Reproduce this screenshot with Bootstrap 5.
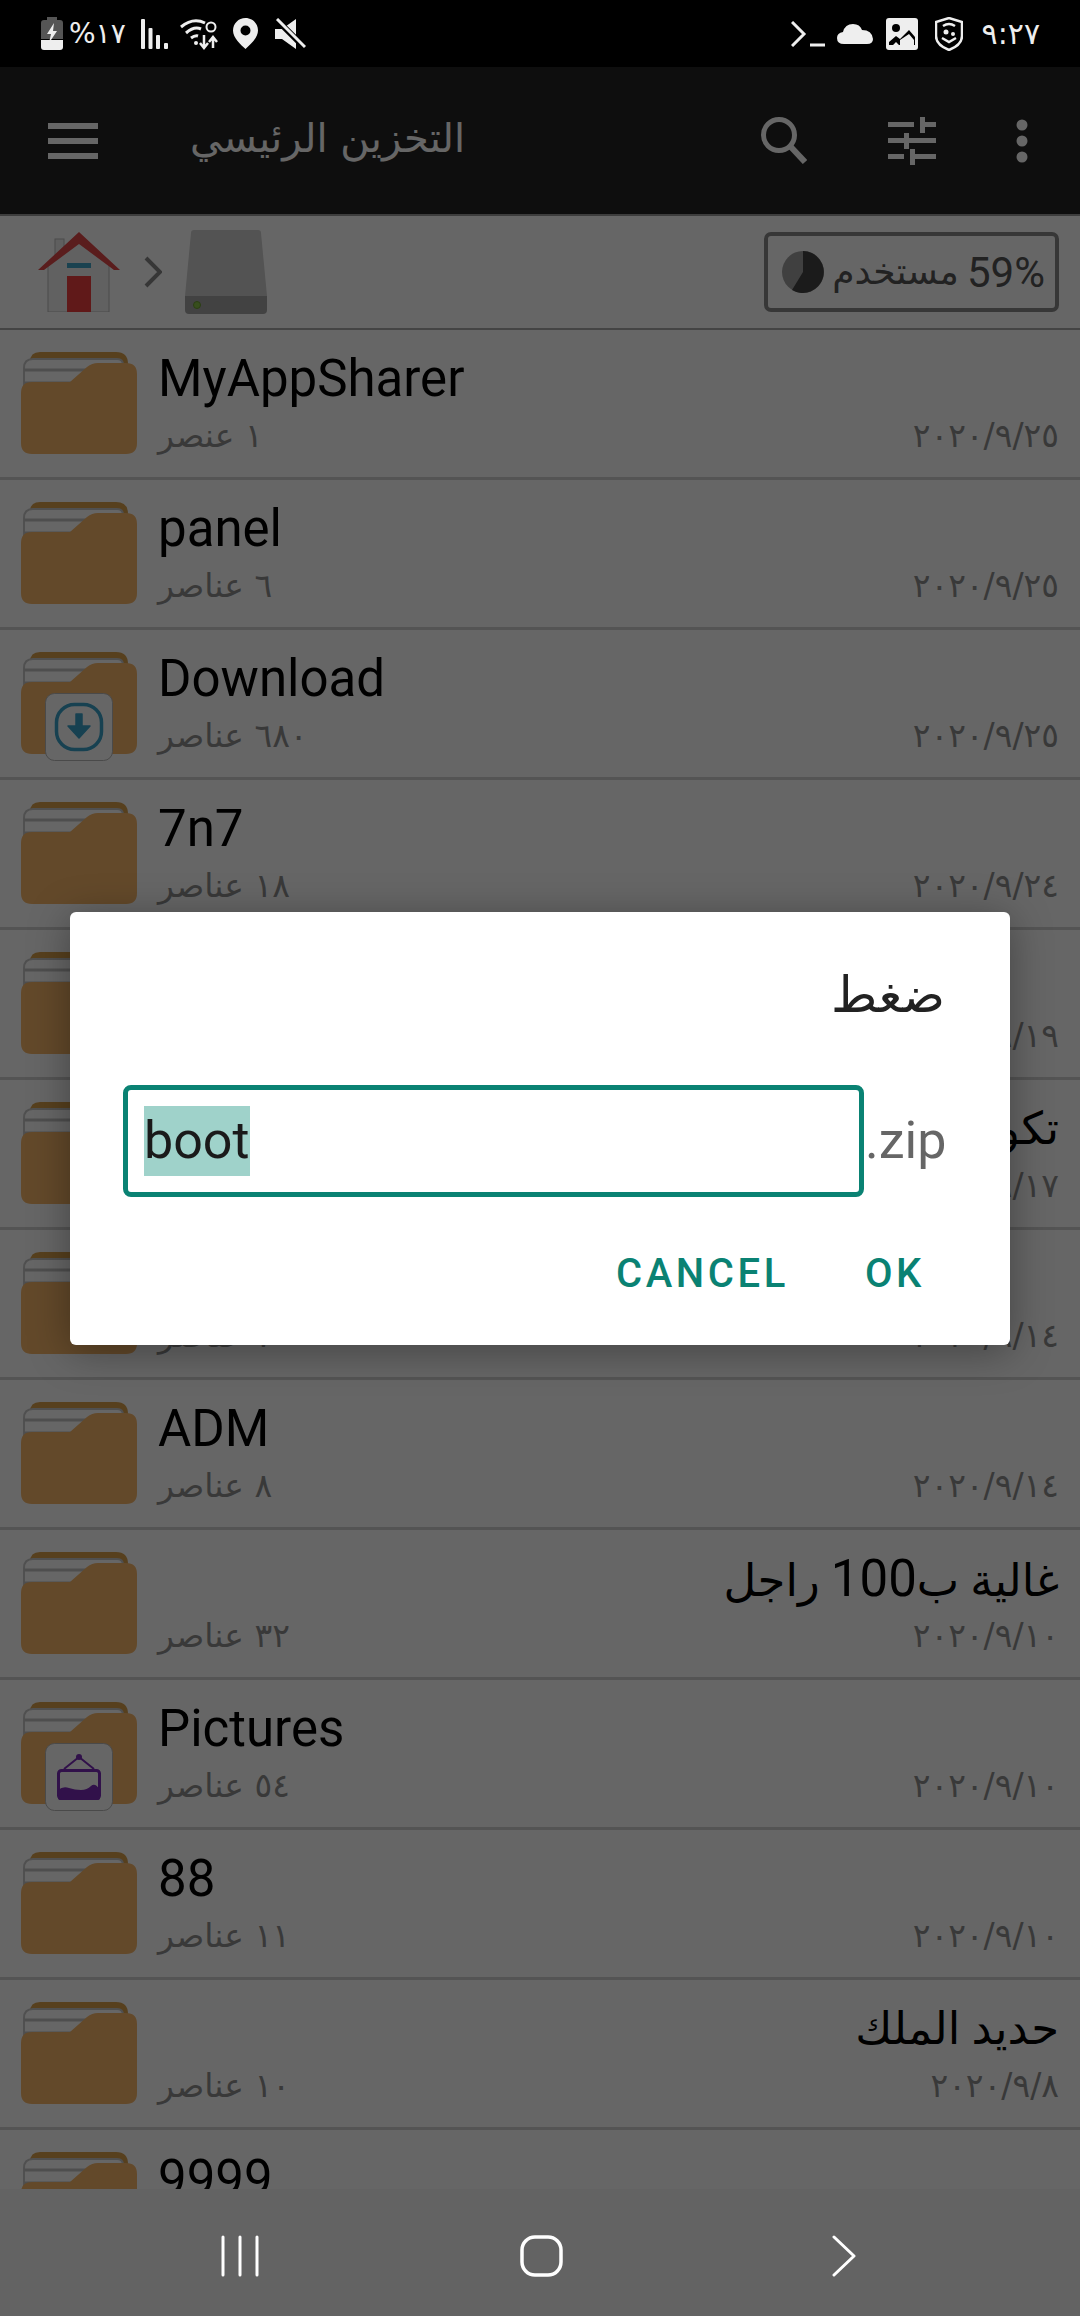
<!DOCTYPE html>
<html lang="ar">
<head>
<meta charset="utf-8">
<title>التخزين الرئيسي</title>
<link rel="stylesheet" href="https://cdn.jsdelivr.net/npm/bootstrap@5.3.0/dist/css/bootstrap.min.css">
<style>
html,body{margin:0;height:100%;background:#000}
body{font-family:Roboto,"DejaVu Sans","Noto Sans",sans-serif;width:1080px;height:2316px;overflow:hidden}
.shell{width:1080px;height:2316px}
.sbar{height:67px;flex:none;background:#000;color:#eee;padding:0 40px 0 41px}
.sgroup{height:67px}
.stxt{font-family:"DejaVu Sans",sans-serif;font-size:28px;line-height:1}
.stime{font-family:"DejaVu Sans",sans-serif;font-size:30px;line-height:1}
.gap-pct{margin-left:6px}
.gap-sig{margin-left:15px}.gap-wifi{margin-left:11px}.gap-loc{margin-left:15px}.gap-mute{margin-left:17px}
.gap-cloud{margin-left:12px}.gap-img{margin-left:13px}.gap-shd{margin-left:17px}.gap-time{margin-left:19px}
.stage{flex:1 1 0;min-height:0;position:relative;background:#fff;overflow:hidden}
.scrim{position:absolute;inset:0;background:rgba(0,0,0,.6)}
.appbar{height:147px;flex:none;background:#232323;color:#fff;padding:0 52px 0 48px}
.apptitle{font-family:"DejaVu Sans",sans-serif;font-size:40px;width:272px;margin-left:92px;margin-top:-6px;white-space:nowrap;text-align:right;color:#fff}
.gap-tune{margin-left:81px}.gap-dots{margin-left:80px}
.crumb{height:116px;flex:none;background:#fff;border-top:2px solid #999;border-bottom:2px solid #aaa;padding:0 21px 0 38px}
.gap-drive{margin-left:23px}
.chip{width:295px;height:80px;border:4px solid #8a8a8a;border-radius:7px;color:#555;font-size:42px;padding:0 10px 0 14px}
.chip-ar{font-family:"DejaVu Sans",sans-serif;font-size:36px}
.frow{height:150px;flex:none;border-bottom:3px solid #d2d2d2;padding:22px 21px 0 21px;gap:21px}
.fico{position:relative;width:116px;height:108px;flex:none}
.fbody{flex:1 1 0;min-width:0;margin-top:-5px}
.fname{font-size:51px;line-height:64px;height:64px;color:#000;white-space:nowrap;font-family:Roboto,"DejaVu Sans",sans-serif}
.fname-ar{font-size:45px}
.fname-lat{font-size:51px}
.fmeta{font-family:"DejaVu Sans",sans-serif;font-size:33px;line-height:44px;color:#8e8e8e;margin-top:3px}
.fbadge{left:24px;top:41px}
.list{flex:1 1 0;min-height:0;overflow:hidden;background:#fff}
.navb{height:127px;flex:none;background:#636363;padding:6px 0 0}
.navin{padding-left:220px}
.gap-home{margin-left:260px}.gap-back{margin-left:269px}
.dlg{position:absolute;left:70px;top:845px;width:940px;height:433px;border:0;border-radius:6px;background:#fff;box-shadow:0 6px 40px rgba(0,0,0,.35);padding:63px 65px 0 53px}
.dtitle{font-family:"DejaVu Sans",sans-serif;font-size:50px;line-height:40px;color:#222;text-align:right}
.drow{margin-top:70px}
.dfield{width:741px;height:112px;border:5px solid #0a8273;border-radius:8px;padding:16px;font-size:52px;line-height:70px;color:#1a1a1a;flex:none;background:#fff}
.dfield:focus{box-shadow:none}
.dsel{background:#9fd2ca;display:inline-block;height:70px}
.dext{font-size:52px;color:#666;line-height:1;margin-left:1px}
.dacts{margin-top:53px;padding-right:20px;gap:76px}
.dbtn{padding:0;border:0;background:none;color:#0a8273;font-size:40px;font-weight:500;letter-spacing:3.6px;line-height:48px;border-radius:0}
.dbtn:hover,.dbtn:active{color:#0a8273;background:none}
</style>
</head>
<body>
<svg width="0" height="0" class="d-block position-absolute" aria-hidden="true">
  <symbol id="fold" viewBox="0 0 116 108">
    <path d="M9 10Q9 0 19 0H95Q107 0 107 12V40H9Z" fill="#d9a04d"/>
    <path d="M3 16Q3 7 12 7H96Q102 7 102 13V50H3Z" fill="#fff" stroke="#c8c8c8" stroke-width="2"/>
    <path d="M3 18H80M3 31H72" stroke="#c4c4c4" stroke-width="3" fill="none"/>
    <path d="M0 41Q0 30 11 30H49L66 15Q71 11 77 11H105Q116 11 116 22V91Q116 102 105 102H11Q0 102 0 91Z" fill="#f7b669"/>
  </symbol>
  <symbol id="bdl" viewBox="0 0 68 68">
    <rect x=".5" y=".5" width="67" height="67" rx="9" fill="#fff" stroke="#b9b9b9"/>
    <rect x="11.5" y="11.5" width="45" height="45" rx="18" fill="none" stroke="#3ba4cb" stroke-width="3.5"/>
    <path d="M31 21H37V33H45L34 45 23 33H31Z" fill="#3ba4cb" stroke="#3ba4cb" stroke-linejoin="round" stroke-width="1.5"/>
  </symbol>
  <symbol id="bpic" viewBox="0 0 68 68">
    <rect x=".5" y=".5" width="67" height="67" rx="9" fill="#fff" stroke="#b9b9b9"/>
    <path d="M19 26L34 14 49 26" fill="none" stroke="#7a2bb8" stroke-width="2"/>
    <circle cx="34" cy="14" r="3" fill="#7a2bb8"/>
    <rect x="13.5" y="27.5" width="41" height="28" rx="3" fill="#fff" stroke="#7a2bb8" stroke-width="3"/>
    <path d="M13 55V47Q18 43 24 45T36 47 46 43 55 47V55Q55 57 53 57H15Q13 57 13 55Z" fill="#7a2bb8"/>
  </symbol>
</svg>
<div class="shell d-flex flex-column">
  <!-- status bar -->
  <div class="sbar d-flex justify-content-between align-items-center">
    <div class="sgroup d-flex align-items-center">
      <svg width="22" height="33" viewBox="0 0 22 33"><path d="M6 0H16V3H19Q22 3 22 6V22H0V6Q0 3 3 3H6Z" fill="#555"/><path d="M0 23H22V30Q22 33 19 33H3Q0 33 0 30Z" fill="#eee"/><path d="M13 6L6 17H10L8 26 16 14H12Z" fill="#eee"/></svg>
      <span class="stxt gap-pct" dir="ltr">%١٧</span>
      <svg width="28" height="30" viewBox="0 0 28 30" class="gap-sig" fill="#eee"><rect width="4" height="30" rx="1"/><rect x="7.500" y="9" width="4" height="21" rx="1"/><rect x="15" y="16" width="4" height="14" rx="1"/><rect x="23" y="24" width="4" height="6" rx="1"/></svg>
      <svg width="38" height="32" viewBox="0 0 38 32" class="gap-wifi" fill="none" stroke="#eee" stroke-width="3"><path d="M1 9Q13 -1 25 5M6 15Q14 8 21 11M11 20Q15 17 18 18"/><circle cx="16" cy="25" r="2" fill="#eee" stroke="none"/><path d="M24 17V29M20 25L24 30 28 25M33 30V20M29 24L33 19 37 24" stroke-width="2.500"/><circle cx="31" cy="9" r="4.500" stroke-width="2"/></svg>
      <svg width="25" height="31" viewBox="0 0 25 31" class="gap-loc"><path fill-rule="evenodd" d="M12.500 0C5.500 0 0 5.500 0 12.500 0 20 8 27 12.500 31 17 27 25 20 25 12.500 25 5.500 19.500 0 12.500 0ZM12.500 7.500A5 5 0 1 1 12.500 17.500 5 5 0 1 1 12.500 7.500Z" fill="#eee"/></svg>
      <svg width="31" height="31" viewBox="0 0 31 31" class="gap-mute"><path d="M0 11H7L21 1V31L7 21H0Z" fill="#eee"/><path d="M1 1L30 30" stroke="#000" stroke-width="6"/><path d="M2 1L30 29" stroke="#eee" stroke-width="3"/></svg>
    </div>
    <div class="sgroup d-flex align-items-center">
      <svg width="34" height="26" viewBox="0 0 34 26" fill="none" stroke="#eee" stroke-width="3"><path d="M1 1L13 13 1 25M19 24H34"/></svg>
      <svg width="36" height="21" viewBox="0 0 36 21" class="gap-cloud"><path d="M7 21Q0 21 0 15 0 10 6 9 8 1 16 1 23 1 25 7 35 7 36 16 36 21 30 21Z" fill="#eee"/></svg>
      <svg width="32" height="32" viewBox="0 0 32 32" class="gap-img"><rect width="32" height="32" rx="3" fill="#eee"/><circle cx="10" cy="10" r="4" fill="#000"/><path d="M3 26V24L10 18 14 21 23 12 29 19V27H3Z" fill="#000"/><path d="M7 27L10 24 13 27M14 22L23 16 28 22V27H14Z" fill="#eee"/></svg>
      <svg width="28" height="34" viewBox="0 0 28 34" class="gap-shd" fill="none" stroke="#eee" stroke-width="2.500"><path d="M14 1L27 5V19Q27 28 14 33 1 28 1 19V5Z"/><path d="M8 9Q14 5 20 9" /><circle cx="11" cy="15" r="2.500" fill="#eee" stroke="none"/><circle cx="18" cy="17" r="2" fill="#eee" stroke="none"/><path d="M7 21L14 25 21 21" /></svg>
      <span class="stime gap-time" dir="ltr">٩:٢٧</span>
    </div>
  </div>

  <div class="stage d-flex flex-column">
    <div class="appbar d-flex align-items-center">
      <svg width="50" height="36" viewBox="0 0 50 36" fill="#fff" class="flex-none"><rect width="50" height="6"/><rect y="15" width="50" height="6"/><rect y="30" width="50" height="6"/></svg>
      <div class="apptitle">التخزين الرئيسي</div>
      <div class="ms-auto d-flex align-items-center">
        <svg width="46" height="47" viewBox="0 0 46 47" fill="none" stroke="#fff" stroke-width="5"><circle cx="18" cy="18" r="15.500"/><path d="M29 29L44 45" stroke-width="6"/></svg>
        <svg width="48" height="48" viewBox="0 0 48 48" fill="#fff" class="gap-tune"><path d="M0 5H26V10H0ZM37 5H48V10H37ZM32 0H37V16H32ZM0 21H16V26H0ZM21 21H48V26H21ZM16 16H21V32H16ZM0 37H16V42H0ZM27 37H48V42H27ZM22 32H27V48H22Z" /></svg>
        <svg width="12" height="44" viewBox="0 0 12 44" fill="#fff" class="gap-dots"><circle cx="6" cy="6" r="5.500"/><circle cx="6" cy="22" r="5.500"/><circle cx="6" cy="38" r="5.500"/></svg>
      </div>
    </div>
    <div class="crumb d-flex align-items-center">
      <svg width="82" height="80" viewBox="0 0 82 80">
        <rect x="17" y="7" width="9" height="20" fill="#eee" stroke="#bbb"/>
        <path d="M10 32L41 8 71 32V80H10Z" fill="#f2f2f2" stroke="#bbb"/>
        <path d="M0 38L41 0 82 38H76L41 12 6 38Z" fill="#e04a4a"/>
        <rect x="29" y="31" width="24" height="5" fill="#42a5c8"/>
        <rect x="29" y="44" width="24" height="36" fill="#f04040"/>
      </svg>
      <svg width="18" height="32" viewBox="0 0 18 32" fill="none" stroke="#888" stroke-width="4" class="ms-4"><path d="M2 2L16 16 2 30"/></svg>
      <svg width="82" height="84" viewBox="0 0 82 84" class="gap-drive">
        <path d="M9 0H73Q76 0 76 3L82 66H0L6 3Q6 0 9 0Z" fill="#cfcfcf"/>
        <path d="M0 66H82V80Q82 84 78 84H4Q0 84 0 80Z" fill="#a5a5a5"/>
        <circle cx="12" cy="75" r="3.500" fill="#8bc34a" stroke="#6a9a30"/>
      </svg>
      <div class="chip ms-auto d-flex align-items-center justify-content-between">
        <svg width="42" height="42" viewBox="0 0 42 42"><circle cx="21" cy="21" r="21" fill="#a0a0a0"/><path d="M21 21V0A21 21 0 1 1 10 39Z" fill="#444"/></svg>
        <span class="chip-ar">مستخدم</span>
        <span>59%</span>
      </div>
    </div>
    <div class="list">
      <div class="frow d-flex"><div class="fico"><svg width="116" height="108"><use href="#fold"/></svg></div><div class="fbody"><div class="fname" dir="auto">MyAppSharer</div><div class="fmeta d-flex justify-content-between"><span>١ عنصر</span><span>٢٠٢٠/٩/٢٥</span></div></div></div>
      <div class="frow d-flex"><div class="fico"><svg width="116" height="108"><use href="#fold"/></svg></div><div class="fbody"><div class="fname" dir="auto">panel</div><div class="fmeta d-flex justify-content-between"><span>٦ عناصر</span><span>٢٠٢٠/٩/٢٥</span></div></div></div>
      <div class="frow d-flex"><div class="fico"><svg width="116" height="108" class="position-absolute top-0 start-0"><use href="#fold"/></svg><svg width="68" height="68" class="position-absolute fbadge"><use href="#bdl"/></svg></div><div class="fbody"><div class="fname" dir="auto">Download</div><div class="fmeta d-flex justify-content-between"><span>٦٨٠ عناصر</span><span>٢٠٢٠/٩/٢٥</span></div></div></div>
      <div class="frow d-flex"><div class="fico"><svg width="116" height="108"><use href="#fold"/></svg></div><div class="fbody"><div class="fname" dir="auto">7n7</div><div class="fmeta d-flex justify-content-between"><span>١٨ عناصر</span><span>٢٠٢٠/٩/٢٤</span></div></div></div>
      <div class="frow d-flex"><div class="fico"><svg width="116" height="108"><use href="#fold"/></svg></div><div class="fbody"><div class="fname" dir="auto">Music</div><div class="fmeta d-flex justify-content-between"><span>٣ عناصر</span><span>٢٠٢٠/٩/١٩</span></div></div></div>
      <div class="frow d-flex"><div class="fico"><svg width="116" height="108"><use href="#fold"/></svg></div><div class="fbody"><div class="fname fname-ar" dir="auto">تكوين</div><div class="fmeta d-flex justify-content-between"><span>٢ عناصر</span><span>٢٠٢٠/٩/١٧</span></div></div></div>
      <div class="frow d-flex"><div class="fico"><svg width="116" height="108"><use href="#fold"/></svg></div><div class="fbody"><div class="fname" dir="auto">Files</div><div class="fmeta d-flex justify-content-between"><span>٧ عناصر</span><span>٢٠٢٠/٩/١٤</span></div></div></div>
      <div class="frow d-flex"><div class="fico"><svg width="116" height="108"><use href="#fold"/></svg></div><div class="fbody"><div class="fname" dir="auto">ADM</div><div class="fmeta d-flex justify-content-between"><span>٨ عناصر</span><span>٢٠٢٠/٩/١٤</span></div></div></div>
      <div class="frow d-flex"><div class="fico"><svg width="116" height="108"><use href="#fold"/></svg></div><div class="fbody"><div class="fname fname-ar" dir="auto">غالية ب<span class="fname-lat">100</span> راجل</div><div class="fmeta d-flex justify-content-between"><span>٣٢ عناصر</span><span>٢٠٢٠/٩/١٠</span></div></div></div>
      <div class="frow d-flex"><div class="fico"><svg width="116" height="108" class="position-absolute top-0 start-0"><use href="#fold"/></svg><svg width="68" height="68" class="position-absolute fbadge"><use href="#bpic"/></svg></div><div class="fbody"><div class="fname" dir="auto">Pictures</div><div class="fmeta d-flex justify-content-between"><span>٥٤ عناصر</span><span>٢٠٢٠/٩/١٠</span></div></div></div>
      <div class="frow d-flex"><div class="fico"><svg width="116" height="108"><use href="#fold"/></svg></div><div class="fbody"><div class="fname" dir="auto">88</div><div class="fmeta d-flex justify-content-between"><span>١١ عناصر</span><span>٢٠٢٠/٩/١٠</span></div></div></div>
      <div class="frow d-flex"><div class="fico"><svg width="116" height="108"><use href="#fold"/></svg></div><div class="fbody"><div class="fname fname-ar" dir="auto">حديد الملك</div><div class="fmeta d-flex justify-content-between"><span>١٠ عناصر</span><span>٢٠٢٠/٩/٨</span></div></div></div>
      <div class="frow d-flex"><div class="fico"><svg width="116" height="108"><use href="#fold"/></svg></div><div class="fbody"><div class="fname" dir="auto">9999</div></div></div>
    </div>
    <div class="scrim"></div>
    <div class="dlg modal-content">
      <div class="dtitle">ضغط</div>
      <div class="drow d-flex align-items-center">
        <div class="dfield form-control"><span class="dsel">boot</span></div>
        <span class="dext">.zip</span>
      </div>
      <div class="dacts d-flex justify-content-end">
        <button type="button" class="btn dbtn">CANCEL</button>
        <button type="button" class="btn dbtn">OK</button>
      </div>
    </div>
  </div>

  <div class="navb d-flex align-items-center">
    <div class="navin d-flex w-100 align-items-center">
      <svg width="40" height="42" viewBox="0 0 40 42" stroke="#fff" stroke-width="3" stroke-linecap="round"><path d="M3 2V40M20 2V40M37 2V40"/></svg>
      <svg width="43" height="42" viewBox="0 0 43 42" fill="none" stroke="#fff" stroke-width="3.500" class="gap-home"><rect x="2" y="2" width="39" height="38" rx="13"/></svg>
      <svg width="24" height="42" viewBox="0 0 24 42" fill="none" stroke="#fff" stroke-width="3" stroke-linecap="round" stroke-linejoin="round" class="gap-back"><path d="M2 2L22 21 2 40"/></svg>
    </div>
  </div>
</div>
</body>
</html>
